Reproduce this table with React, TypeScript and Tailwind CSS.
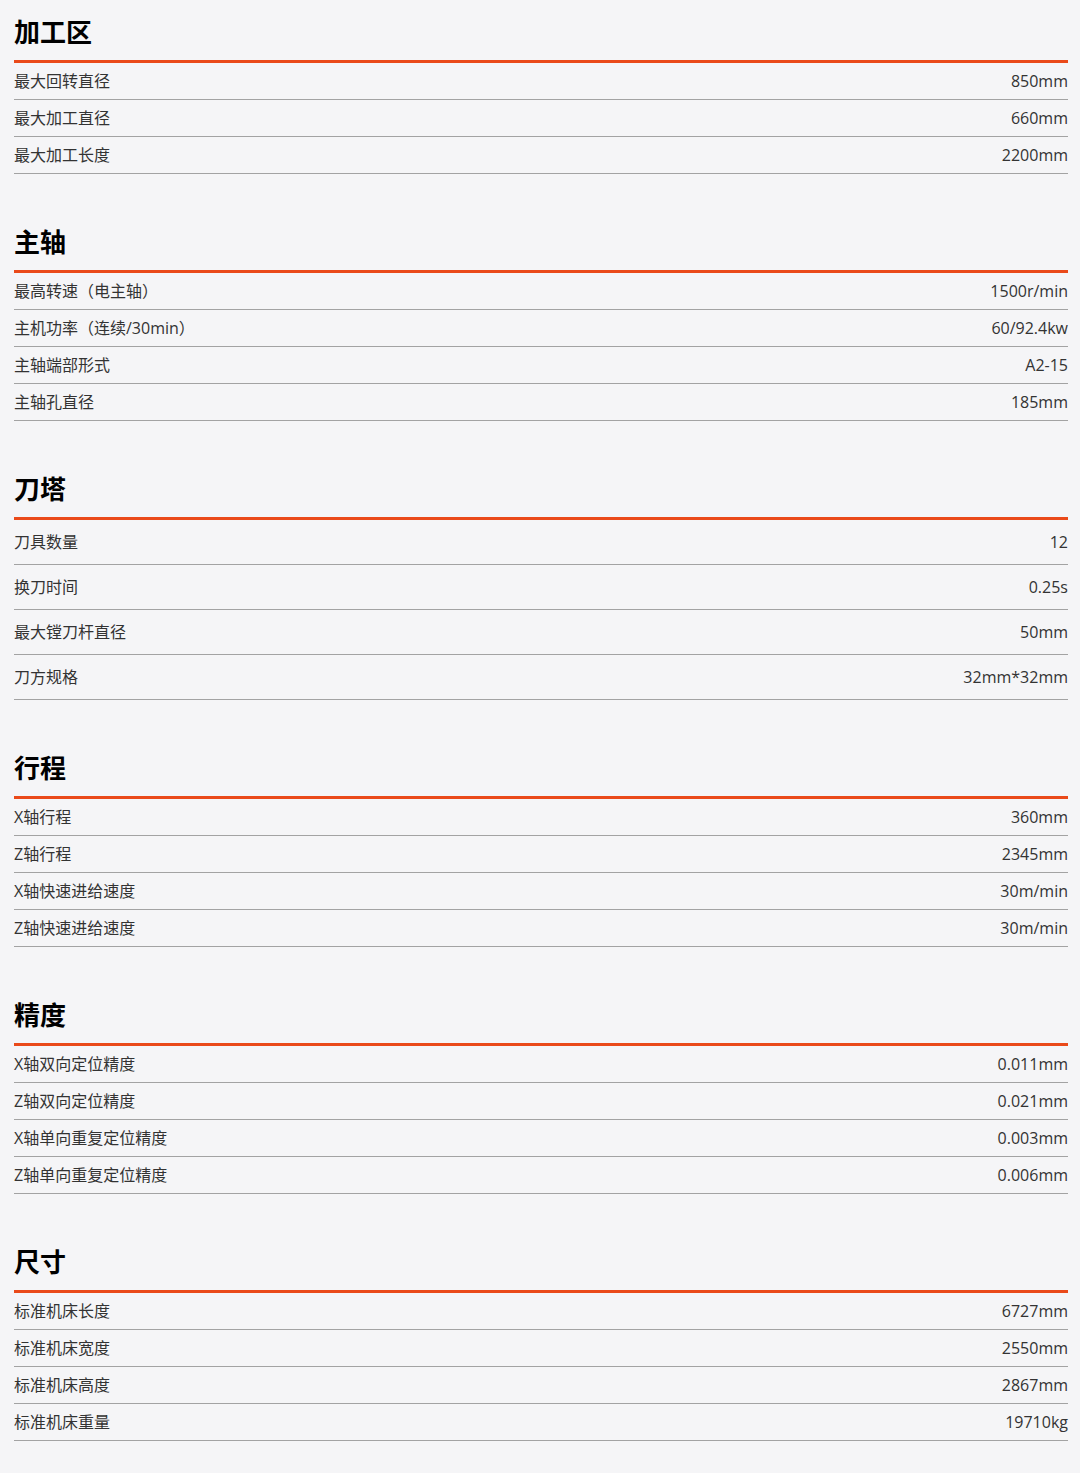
interface SpecRow {
  label: string
  value: string
}
interface SpecSection {
  title: string
  rows: SpecRow[]
  tall?: boolean
}

const sections: SpecSection[] = [
  {
    title: "加工区",
    rows: [
      { label: "最大回转直径", value: "850mm" },
      { label: "最大加工直径", value: "660mm" },
      { label: "最大加工长度", value: "2200mm" },
    ],
  },
  {
    title: "主轴",
    rows: [
      { label: "最高转速（电主轴）", value: "1500r/min" },
      { label: "主机功率（连续/30min）", value: "60/92.4kw" },
      { label: "主轴端部形式", value: "A2-15" },
      { label: "主轴孔直径", value: "185mm" },
    ],
  },
  {
    title: "刀塔",
    tall: true,
    rows: [
      { label: "刀具数量", value: "12" },
      { label: "换刀时间", value: "0.25s" },
      { label: "最大镗刀杆直径", value: "50mm" },
      { label: "刀方规格", value: "32mm*32mm" },
    ],
  },
  {
    title: "行程",
    rows: [
      { label: "X轴行程", value: "360mm" },
      { label: "Z轴行程", value: "2345mm" },
      { label: "X轴快速进给速度", value: "30m/min" },
      { label: "Z轴快速进给速度", value: "30m/min" },
    ],
  },
  {
    title: "精度",
    rows: [
      { label: "X轴双向定位精度", value: "0.011mm" },
      { label: "Z轴双向定位精度", value: "0.021mm" },
      { label: "X轴单向重复定位精度", value: "0.003mm" },
      { label: "Z轴单向重复定位精度", value: "0.006mm" },
    ],
  },
  {
    title: "尺寸",
    rows: [
      { label: "标准机床长度", value: "6727mm" },
      { label: "标准机床宽度", value: "2550mm" },
      { label: "标准机床高度", value: "2867mm" },
      { label: "标准机床重量", value: "19710kg" },
    ],
  },
]

export default function App() {
  return (
    <div className="min-h-screen bg-[#f5f5f7] pl-[14px] pr-[12px] pb-8 font-['Open_Sans','Noto_Sans_CJK_SC',sans-serif]">
      <div className="flex flex-col gap-9">
        {sections.map((section) => (
          <section key={section.title} className="pt-[14px]">
            <h2 className="mb-[10px] h-9 text-[26px] leading-9 font-bold text-black">
              {section.title}
            </h2>
            <div className="border-t-[3px] border-[#ea4a1a]">
              {section.rows.map((row) => (
                <div
                  key={row.label}
                  className={
                    section.tall
                      ? "flex h-[45px] items-center justify-between border-b border-[#a3a3a3] text-base text-[#333]"
                      : "flex h-[37px] items-center justify-between border-b border-[#a3a3a3] text-base text-[#333]"
                  }
                >
                  <span>{row.label}</span>
                  <span>{row.value}</span>
                </div>
              ))}
            </div>
          </section>
        ))}
      </div>
    </div>
  )
}
